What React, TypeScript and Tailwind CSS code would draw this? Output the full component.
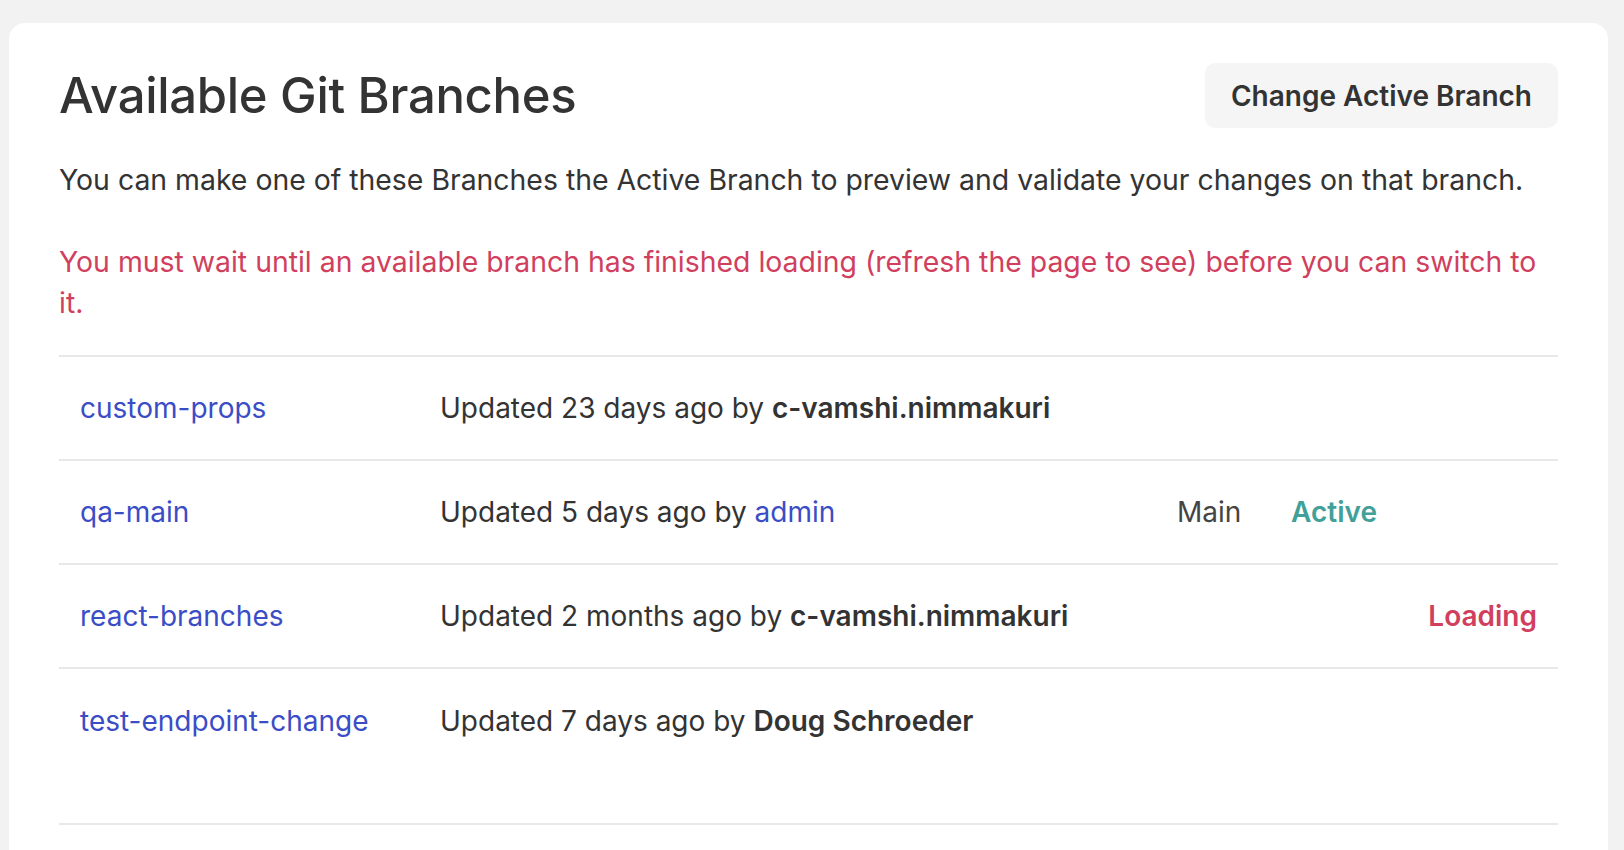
const rows = [
  { name: 'custom-props', when: '23 days ago', by: 'c-vamshi.nimmakuri', byLink: false, main: false, active: false, loading: false },
  { name: 'qa-main', when: '5 days ago', by: 'admin', byLink: true, main: true, active: true, loading: false },
  { name: 'react-branches', when: '2 months ago', by: 'c-vamshi.nimmakuri', byLink: false, main: false, active: false, loading: true },
  { name: 'test-endpoint-change', when: '7 days ago', by: 'Doug Schroeder', byLink: false, main: false, active: false, loading: false },
];

export default function App() {
  return (
    <div className="min-h-[850px] bg-[#f2f2f2] pt-[23px] pl-[9px] pr-[16px] font-['Inter','Noto_Sans',sans-serif] text-[#333]">
      <div className="bg-white rounded-[16px] px-[50px] pt-[40px] pb-[40px]">
        <div className="flex items-center justify-between">
          <h1 className="text-[49px] font-medium leading-none tracking-[-0.3px]">Available Git Branches</h1>
          <button className="h-[65px] px-[26px] rounded-[10px] bg-[#f5f5f5] text-[28px] font-semibold text-[#333]">
            Change Active Branch
          </button>
        </div>

        <p className="mt-[31px] text-[28.4px] leading-[41.5px]">
          You can make one of these Branches the Active Branch to preview and validate your changes on that branch.
        </p>
        <p className="mt-[40px] text-[28.4px] leading-[41.5px] text-[#d13f5e]">
          You must wait until an available branch has finished loading (refresh the page to see) before you can switch to it.
        </p>

        <div className="mt-[31px] border-t-2 border-b-2 border-[#e8e8e8] pb-[50px]">
          {rows.map((r, i) => (
            <div
              key={r.name}
              className={`grid grid-cols-[360px_737px_114px_1fr] items-center h-[104px] px-[21px] text-[28px] ${
                i < rows.length - 1 ? 'border-b-2 border-[#e8e8e8]' : ''
              }`}
            >
              <a className="text-[#3a4dc6] cursor-pointer">{r.name}</a>
              <div>
                Updated {r.when} by{' '}
                {r.byLink ? (
                  <a className="text-[#3a4dc6] cursor-pointer">{r.by}</a>
                ) : (
                  <span className="font-semibold">{r.by}</span>
                )}
              </div>
              <div className="text-[#444]">{r.main ? 'Main' : ''}</div>
              <div className="flex">
                {r.active && <span className="font-semibold text-[#42a098]">Active</span>}
                {r.loading && <span className="ml-auto font-semibold text-[#d13f5e]">Loading</span>}
              </div>
            </div>
          ))}
        </div>
      </div>
    </div>
  );
}
